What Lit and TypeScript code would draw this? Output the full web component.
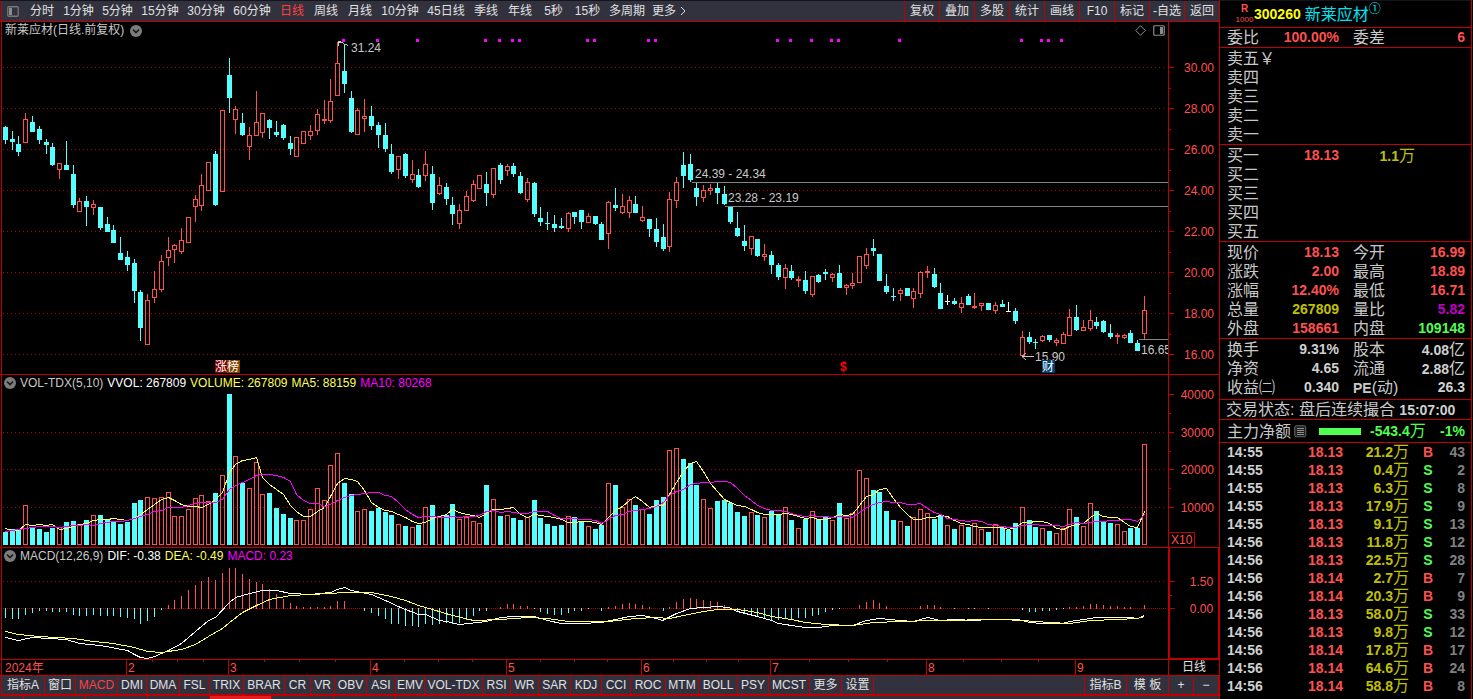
import { LitElement, html, svg, css, nothing } from "lit";
import { customElement, property, state } from "lit/decorators.js";
import { classMap } from "lit/directives/class-map.js";

/* d = falling, u = rising, f/g = unchanged close (volume up / volume down)
   each entry: kind, high, body top, body bottom, low */
const CANDLES = `
d126,127,140,144 d131,139,142,150 d136,144,152,156 u113,119,143,143 d116,122,132,132 d126,129,140,144
d139,142,145,154 d143,147,165,166 u163,163,170,179 d141,165,170,170 d165,174,205,208 u198,201,212,212
d196,201,207,226 u200,204,208,215 d207,207,228,230 d217,224,232,232 d225,230,243,243 d237,253,260,260
d251,257,265,271 d259,263,291,303 d290,292,328,341 u294,300,345,345 u271,289,298,303 u255,261,290,292
u237,250,258,266 u244,245,250,263 u228,240,252,254 u217,217,243,243 u195,199,207,222 u174,185,206,211
u162,162,191,191 d151,154,205,206 u110,110,192,192 d58,75,98,113 u106,109,120,134 d113,123,135,136
u127,135,147,160 u91,122,136,136 u113,113,133,138 d119,120,128,139 d121,132,135,137 d124,125,138,140
d136,143,149,155 u137,137,157,157 u131,131,144,144 u125,131,136,140 u109,114,131,135 u100,119,121,124
u79,101,121,123 u42,63,96,96 d45,71,84,93 d91,98,132,133 u108,110,135,135 u99,116,119,132
d106,116,126,130 d122,125,135,148 d123,135,149,152 d144,154,172,174 u156,156,170,179 d153,154,176,178
u160,174,180,183 d169,175,187,188 u151,164,176,181 d166,174,203,210 u177,185,194,195 d183,187,199,205
d197,205,214,225 u204,210,224,229 u191,196,211,211 u180,184,201,202 u175,175,189,189 d172,184,193,206
u168,168,195,198 d163,165,180,184 u164,166,171,176 d163,166,174,177 d172,176,193,194 u178,182,200,202
d182,183,214,217 d207,218,222,226 d212,223,224,230 d215,224,228,232 d218,226,228,229 u212,213,229,232
d212,212,217,224 d210,210,222,229 u213,216,223,223 d216,216,224,225 d222,224,240,240 u201,202,234,249
d188,205,208,211 u194,206,213,214 u196,200,213,218 d196,204,213,213 u206,217,221,222 d219,219,229,237
d218,229,242,247 d224,237,249,251 u192,199,247,252 u177,182,201,208 d152,165,176,188 d154,164,180,182
d183,188,197,206 u185,190,198,202 u184,188,191,195 d183,188,193,204 d186,194,204,205 d207,207,222,224
d212,228,236,237 d225,241,246,251 u236,236,249,255 d239,239,256,257 u244,254,257,261 d251,255,265,274
d263,265,277,280 u264,268,278,289 d265,271,278,280 u276,279,281,287 d271,280,291,294 u276,276,295,297
d274,275,282,283 d269,272,274,280 u273,274,278,282 d265,273,288,288 u284,285,288,295 u273,283,286,289
u256,256,283,283 u248,254,266,269 d239,248,251,256 d254,254,281,281 d274,286,292,294 d288,296,297,301
u288,290,294,301 d288,288,296,296 u288,291,299,308 u271,272,294,298 u266,271,273,278 d268,274,287,288
d283,293,309,309 f295,301,302,305 d298,301,304,305 u297,303,308,313 d294,296,305,305 u293,306,308,309
u303,303,306,311 d303,303,310,310 u302,305,311,314 d300,304,307,307 g302,311,312,312 d308,311,321,324
u331,337,356,356 d332,337,342,344 d339,342,343,349 u335,336,341,342 d335,335,340,342 u338,340,343,346
u332,334,344,344 u309,317,336,336 d305,317,330,331 u320,327,331,331 u310,320,329,331 d317,322,326,329
d320,321,332,333 d324,333,337,339 u333,335,337,344 u334,335,338,339 d330,333,343,343 d340,343,351,351
u296,310,334,339`
  .trim()
  .split(/\s+/)
  .map((t) => ({ kind: t[0], v: t.slice(1).split(",").map(Number) }));

const VOLUME = [
  532, 529, 530, 505, 527, 529, 532, 528, 527, 522, 521, 524, 520, 515, 515, 519, 521, 524, 522, 503,
  500, 497, 498, 497, 492, 516, 516, 509, 498, 495, 501, 493, 475, 394, 456, 483, 488, 462, 494, 493,
  508, 514, 518, 520, 520, 509, 488, 500, 465, 453, 483, 494, 511, 509, 511, 508, 512, 515, 524, 526,
  527, 525, 507, 505, 516, 515, 504, 519, 517, 521, 523, 485, 499, 516, 515, 518, 520, 517, 500, 518,
  524, 526, 525, 516, 517, 522, 526, 529, 525, 483, 485, 507, 499, 505, 509, 514, 500, 497, 450, 448,
  459, 463, 485, 499, 508, 501, 500, 503, 512, 516, 512, 515, 517, 511, 514, 507, 520, 528, 519, 511,
  519, 517, 520, 503, 518, 513, 470, 478, 490, 492, 511, 520, 521, 526, 517, 509, 513, 519, 515, 525,
  529, 525, 527, 523, 529, 532, 524, 528, 530, 523, 507, 520, 527, 528, 531, 533, 528, 509, 517, 526,
  503, 511, 522, 523, 524, 531, 528, 528, 444,
];

const MACD = [
  -10, -11, -11, -7, -5, -3, -3, -4, -4, -4, -7, -8, -8, -7, -8, -8, -8, -9, -10, -11, -16, -13, -9, -2,
  3, 8, 12, 18, 23, 27, 31, 28, 35, 40, 40, 34, 29, 26, 24, 19, 14, 9, 5, 2, 1, 1, 1, 1, 2, 7, 7, 0, 0,
  -3, -5, -8, -11, -16, -16, -18, -18, -19, -16, -17, -16, -15, -16, -15, -12, -8, -3, -3, 0, 1, 4, 4, 2,
  2, -1, -4, -6, -7, -7, -5, -3, -3, -1, 0, -3, 1, 2, 4, 5, 4, 3, 1, 0, -3, 1, 6, 9, 10, 9, 8, 7, 6, 3,
  0, -4, -6, -8, -9, -10, -12, -12, -11, -11, -10, -10, -8, -7, -4, -2, -1, 0, 0, 3, 6, 8, 5, 2, 0, 0, 0,
  0, 2, 3, 3, 1, 0, -1, 0, -1, -1, 0, -1, 0, 0, 0, 0, -2, -4, -4, -3, -3, -2, -1, 1, 1, 2, 4, 4, 3, 2, 2,
  1, 1, 0, 3,
];

const DIF =
  "5,637 18,640 32,637 66,639 79,643 100,645 127,650 134,654 140,657 147,658 154,656 168,650 181,643 195,631 208,620 215,617 229,602 235,597 249,593 262,590 276,590 290,593 310,594 330,592 337,589 344,587 351,590 371,594 385,600 400,607 418,614 425,614 439,620 446,621 459,624 486,621 500,617 513,616 534,616 547,620 561,623 581,623 601,622 615,619 629,616 642,615 656,618 662,620 676,613 690,608 717,606 728,607 737,611 757,616 771,620 778,623 798,626 805,627 818,627 832,625 852,625 866,620 879,618 900,620 913,621 927,617 940,620 954,619 974,620 988,619 1018,619 1029,622 1042,623 1062,623 1069,621 1083,619 1096,617 1130,617 1137,618 1144,615";
const DEA =
  "5,631 18,634 39,636 73,638 93,641 113,643 134,647 147,651 161,652 181,649 195,644 208,636 222,628 229,622 242,612 256,605 269,599 290,595 330,593 344,592 371,592 391,596 405,600 418,605 432,609 452,615 473,620 500,619 527,617 547,618 568,621 608,621 635,618 656,617 669,618 683,615 703,611 717,609 737,609 757,612 771,616 791,619 805,622 825,624 852,625 873,622 900,621 934,620 1000,619 1022,620 1049,622 1069,623 1090,620 1117,619 1137,618 1144,616";

const SIGNALS = [
  342, 376, 416, 484, 498, 511, 518, 586, 593, 647, 654, 776, 789, 810, 830, 837, 898, 1020, 1040, 1047, 1060,
];

const PLOT_LEFT = 2;
const PLOT_WIDTH = 1166;
const slotX = (i: number) => Math.floor(5.35 + 6.78 * i);
const box = (x: number, y: number, w: number, h: number) => `M${x} ${y}h${w}v${h}h${-w}z`;
const frame = (x: number, top: number, bottom: number) =>
  box(x - 1.5, top + 0.5, 4, Math.max(bottom - top - 1, 0.5));

function average(span: number, head: number[]) {
  return VOLUME.map((_, i) => {
    const y =
      i < span - 1
        ? head[Math.min(i, head.length - 1)]
        : VOLUME.slice(i - span + 1, i + 1).reduce((a, b) => a + b, 0) / span;
    return `${slotX(i) + 0.5},${Math.round(y) + 0.5}`;
  }).join(" ");
}

/* places unscaled content at a horizontal share of the plot */
const pin = (x: number, y: number, content: unknown) => svg`
  <svg x=${((x - PLOT_LEFT) / PLOT_WIDTH) * 100 + "%"} y=${y} overflow="visible">${content}</svg>`;

const gridLine = (y: number, dash = "1 3") => svg`
  <line class="grid" x1="3" x2="1167" y1=${y + 0.5} y2=${y + 0.5} stroke-dasharray=${dash} />`;

const fold = html`<button class="fold" aria-label="展开">
  <svg width="12" height="12" viewBox="0 0 12 12">
    <circle cx="6" cy="6" r="6" fill="#7c7c7c" />
    <path d="M3 4.500l3 3 3-3" fill="none" stroke="#181818" stroke-width="1.600" />
  </svg>
</button>`;

const base = css`
  :host, * { box-sizing: border-box; }
  button {
    margin: 0; padding: 0; border: 0; background: none; color: inherit;
    font: inherit; white-space: nowrap; cursor: pointer;
  }
`;

@customElement("tool-bar")
class ToolBar extends LitElement {
  @state() private active = "日线";

  static styles = [base, css`
    :host {
      display: flex; height: 22px; background: #32323f; color: #e0e0e0;
      border-top: 1px solid #14141c; border-bottom: 1px solid #c00000;
      line-height: 20px;
    }
    .side { width: 22px; margin: 0 2px 0 1px; border-left: 1px solid #c00000; display: grid; place-items: center; }
    .periods { display: flex; flex: 1; }
    .periods button { text-align: center; }
    .periods .on { color: #ff4040; }
    .periods .more { display: flex; align-items: center; gap: 4px; padding-left: 3px; }
    .actions { display: flex; }
    .actions button { width: 35px; border-left: 1px solid #c00000; }
  `];

  private periods: [string, number][] = [
    ["分时", 34], ["1分钟", 39], ["5分钟", 39], ["15分钟", 46], ["30分钟", 46], ["60分钟", 46],
    ["日线", 34], ["周线", 34], ["月线", 34], ["10分钟", 46], ["45日线", 46], ["季线", 34],
    ["年线", 34], ["5秒", 33], ["15秒", 35], ["多周期", 44],
  ];

  render() {
    return html`
      <button class="side" aria-label="侧栏">
        <svg width="12" height="11" viewBox="0 0 12 11">
          <rect x=".75" y=".75" width="10.5" height="9.5" rx="1" fill="none" stroke="#777" stroke-width="1.3" />
          <rect x="2" y="2" width="3" height="7" fill="#8c8c8c" />
        </svg>
      </button>
      <nav class="periods">
        ${this.periods.map(([name, width]) => html`<button
          class=${classMap({ on: this.active === name })}
          style="width:${width}px"
          @click=${() => (this.active = name)}>${name}</button>`)}
        <button class="more">更多
          <svg width="6" height="10" viewBox="0 0 6 10"><path d="M1 1l4 4-4 4" fill="none" stroke="#e0e0e0" /></svg>
        </button>
      </nav>
      <div class="actions">
        ${["复权", "叠加", "多股", "统计", "画线", "F10", "标记", "-自选", "返回"].map(
          (name) => html`<button>${name}</button>`)}
      </div>`;
  }
}

@customElement("axis-scale")
class AxisScale extends LitElement {
  @property({ type: Number }) height = 0;
  @property({ attribute: false }) labels: [number, string][] = [];
  @property({ attribute: false }) minor: number[] = [];

  static styles = css`
    :host { display: block; }
    svg { display: block; }
    path { fill: #c00000; }
    text { fill: #ff5050; text-anchor: end; font-size: 12px; }
  `;

  render() {
    return html`<svg width="100%" height=${this.height}>
      <path d=${this.labels.map(([y]) => box(0, y, 5, 1)).join("") + this.minor.map((y) => box(0, y, 2, 1)).join("")} />
      <svg x="90%" overflow="visible">${this.labels.map(([y, t]) => svg`<text y=${y + 5}>${t}</text>`)}</svg>
    </svg>`;
  }
}

@customElement("stock-charts")
class StockCharts extends LitElement {
  static styles = [base, css`
    :host { display: block; }
    .pane {
      display: grid; grid-template-columns: minmax(0, 1fr) 51px;
      border-bottom: 1px solid #c00000;
    }
    .plot { border-left: 1px solid #c00000; margin-left: 1px; min-width: 0; }
    .axis { border-left: 1px solid #c00000; position: relative; }
    .axis.boxed { border: 2px solid #c00000; border-width: 1px 1px 1px 2px; margin: -1px 0 0; }
    header { display: flex; align-items: center; height: 16px; padding-left: 2px; color: #c8c8c8; gap: 4px; line-height: 16px; white-space: nowrap; }
    header.title { height: 17px; padding: 0 3px 0 3px; gap: 6px; line-height: 17px; }
    .tools { margin-left: auto; display: flex; align-items: center; gap: 7px; }
    .fold, .fold svg { display: block; width: 12px; height: 12px; }
    .white { color: #fff; }
    .yellow { color: #ffff54; }
    .magenta { color: #ff00ff; }
    svg.chart { display: block; width: 100%; }
    .chart text { font-size: 12px; fill: #c8c8c8; }
    .chart .mark { fill: #fff; }
    .chart .cash { fill: #ff0000; font-weight: bold; }
    .crisp { shape-rendering: crispEdges; }
    .grid { stroke: #b00000; }
    .down { fill: #54ffff; }
    .up { fill: none; stroke: #ff5050; }
    .upfill { fill: #ff5050; }
    .flat { fill: #fff; }
    .gap { stroke: #848484; }
    .line { fill: none; }
    .unit {
      position: absolute; left: 0; bottom: 0; width: 26px; height: 15px; padding-left: 2px;
      border: 1px solid #c00000; border-width: 1px 1px 0 0; color: #ff5050; line-height: 14px;
    }
    .dates .plot { height: 15px; }
    .dates text { font-size: 12px; fill: #ff5050; }
    .dates svg { display: block; width: 100%; }
    .dates .axis { text-align: center; line-height: 15px; height: 15px; color: #e0e0e0; }
  `];

  private candles() {
    let down = "", up = "", upfill = "", flat = "";
    CANDLES.forEach(({ kind, v: [hi, top, bottom, lo] }, i) => {
      const x = slotX(i);
      const wicks = (hi < top ? box(x, hi, 1, top - hi) : "") + (lo > bottom ? box(x, bottom, 1, lo - bottom) : "");
      if (kind === "d") down += wicks + box(x - 2, top, 5, bottom - top);
      else if (kind === "u") {
        upfill += wicks;
        if (bottom - top < 3) upfill += box(x - 2, top, 5, 2);
        else up += frame(x, top, bottom);
      } else flat += wicks + box(x - 2, top, 5, 1);
    });
    return svg`<path class="down" d=${down} /><path class="up" d=${up} />
      <path class="upfill" d=${upfill} /><path class="flat" d=${flat} />`;
  }

  private volumes() {
    let down = "", up = "";
    VOLUME.forEach((top, i) => {
      const x = slotX(i);
      if ("dg".includes(CANDLES[i].kind)) down += box(x - 2, top, 5, 545 - top);
      else up += frame(x, top, 545);
    });
    return svg`<path class="down" d=${down} /><path class="up" d=${up} />`;
  }

  private bars() {
    let down = "", up = "";
    MACD.forEach((h, i) => {
      if (h > 0) up += box(slotX(i), 608 - h, 1, h + 1);
      else if (h < 0) down += box(slotX(i), 608, 1, -h);
    });
    return svg`<path class="upfill" d=${up} /><path class="down" d=${down} />`;
  }

  private months: [number, string][] = [
    [126, "2"], [228, "3"], [370, "4"], [506, "5"], [641, "6"], [770, "7"], [926, "8"], [1075, "9"],
  ];
  private weeks = [152, 177, 203, 264, 299, 335, 404, 438, 472, 540, 574, 607, 673, 706, 738, 809, 848, 887, 963, 1001, 1038];

  render() {
    return html`
      <section class="pane">
        <div class="plot">
          <header class="title">
            <span>新莱应材(日线.前复权)</span>${fold}
            <span class="tools">
              <svg width="11" height="11" viewBox="0 0 11 11"><path d="M5.5.7l4.8 4.8-4.8 4.8L.7 5.5z" fill="none" stroke="#8c8c8c" /></svg>
              <svg width="12" height="11" viewBox="0 0 12 11">
                <rect x=".75" y=".75" width="10.5" height="9.5" rx="1" fill="none" stroke="#8c8c8c" stroke-width="1.2" />
                <rect x="7" y="2" width="3" height="7" fill="#8c8c8c" />
              </svg>
            </span>
          </header>
          <svg class="chart" height="335">
            <svg class="crisp" viewBox="2 39 1166 335" width="100%" height="335" preserveAspectRatio="none">
              ${[67, 108, 149, 190, 231, 272, 313, 354].map((y) => gridLine(y))}
              <path fill="#ff00ff" d=${SIGNALS.map((x) => box(x, 39, 3, 3)).join("")} />
              <path class="gap" d="M692 182.5H1168M725 206.5H1168M1139 339.5H1168" />
              ${this.candles()}
            </svg>
            ${pin(337, 2, svg`<path class="crisp" d="M4 .5H1.500V5M1.500 1.500h4l2 2h2l1.500 1" fill="none" stroke="#c8c8c8" />`)}
            ${pin(351, 13, svg`<text>31.24</text>`)}
            ${pin(695, 139, svg`<text>24.39 - 24.34</text>`)}
            ${pin(728, 163, svg`<text>23.28 - 23.19</text>`)}
            ${pin(1141, 315, svg`<text>16.65</text>`)}
            ${pin(1021, 317, svg`<path d="M1 .5H13M5-3L1 .5 5 4" fill="none" stroke="#c8c8c8" />`)}
            ${pin(1035, 322, svg`<text>15.90</text>`)}
            ${pin(215, 321, svg`<rect width="12" height="13" fill="#800000" /><rect x="12" width="13" height="13" fill="#804000" />
              <text class="mark" y="11">涨榜</text>`)}
            ${pin(1042, 321, svg`<rect width="13" height="13" fill="#003c70" /><text class="mark" y="11">财</text>`)}
            ${pin(840, 322, svg`<path d="M1 2.500L4 0l3 2.500z" fill="#f00" /><text class="cash" y="10">$</text>`)}
          </svg>
        </div>
        <div class="axis">
          <axis-scale .height=${352}
            .labels=${[30, 28, 26, 24, 22, 20, 18, 16].map((n, i) => [45 + i * 41, n + ".00"])}
            .minor=${[0, 1, 2, 3, 4, 5, 6].map((i) => 66 + i * 41)}></axis-scale>
        </div>
      </section>

      <section class="pane">
        <div class="plot">
          <header>${fold}<span>VOL-TDX(5,10)</span><span class="white">VVOL: 267809</span>
            <span class="yellow">VOLUME: 267809</span><span class="yellow">MA5: 88159</span><span class="magenta">MA10: 80268</span></header>
          <svg class="chart crisp" viewBox="2 391 1166 156" height="156" preserveAspectRatio="none">
            ${[432, 469, 507].map((y) => gridLine(y))}
            ${this.volumes()}
            <polyline class="line" stroke="#ffff54" points=${average(5, [528, 530, 530, 524])} />
            <polyline class="line" stroke="#ff00ff" points=${average(10, [531, 530, 529, 528, 527, 526, 526, 526, 527])} />
          </svg>
        </div>
        <div class="axis">
          <axis-scale .height=${172}
            .labels=${[[19, "40000"], [57, "30000"], [94, "20000"], [132, "10000"]]}
            .minor=${[38, 76, 113]}></axis-scale>
          <span class="unit">X10</span>
        </div>
      </section>

      <section class="pane">
        <div class="plot">
          <header>${fold}<span>MACD(12,26,9)</span><span class="white">DIF: -0.38</span>
            <span class="yellow">DEA: -0.49</span><span class="magenta">MACD: 0.23</span></header>
          <svg class="chart crisp" viewBox="2 564 1166 95" height="95" preserveAspectRatio="none">
            ${gridLine(581)}${gridLine(608, "1 1")}
            ${this.bars()}
            <polyline class="line" stroke="#fff" transform="translate(.5 .5)" points=${DIF} />
            <polyline class="line" stroke="#ffff54" transform="translate(.5 .5)" points=${DEA} />
          </svg>
        </div>
        <div class="axis boxed">
          <axis-scale .height=${110} .labels=${[[33, "1.50"], [60, "0.00"]]} .minor=${[47]}></axis-scale>
        </div>
      </section>

      <section class="pane dates">
        <div class="plot">
          <svg height="15">
            <svg class="crisp" viewBox="2 0 1166 15" width="100%" height="15" preserveAspectRatio="none">
              <path fill="#c00000" d=${this.months.map(([x]) => box(x, 0, 1, 15)).join("") + this.weeks.map((x) => box(x, 0, 1, 2)).join("")} />
            </svg>
            ${pin(5, 12, svg`<text>2024年</text>`)}
            ${this.months.map(([x, m]) => pin(x + 2, 12, svg`<text>${m}</text>`))}
          </svg>
        </div>
        <div class="axis">日线</div>
      </section>`;
  }
}

@customElement("indicator-bar")
class IndicatorBar extends LitElement {
  @state() private active = "MACD";

  static styles = [base, css`
    :host { display: block; background: #32323f; color: #e0e0e0; }
    .tabs { display: flex; height: 20px; margin-left: 1px; border-bottom: 2px solid #c00000; border-left: 1px solid #c00000; line-height: 18px; }
    .tabs button { border-right: 1px solid #c00000; }
    .tabs .on { color: #ff4040; }
    .space { flex: 1; border-right: 1px solid #c00000; }
    .tail { display: flex; height: 3px; padding-left: 23px; }
    .tail i { width: 62px; border-left: 1px solid #c00000; }
    .tail .on { background: #e02020; }
  `];

  private tabs: [string, number][] = [
    ["指标A", 43], ["窗口", 31], ["MACD", 42], ["DMI", 29], ["DMA", 33], ["FSL", 30], ["TRIX", 34],
    ["BRAR", 41], ["CR", 26], ["VR", 24], ["OBV", 32], ["ASI", 29], ["EMV", 29], ["VOL-TDX", 58],
    ["RSI", 28], ["WR", 28], ["SAR", 32], ["KDJ", 31], ["CCI", 29], ["ROC", 35], ["MTM", 33],
    ["BOLL", 39], ["PSY", 31], ["MCST", 41], ["更多", 32], ["设置", 32],
  ];
  private tools: [string, number][] = [["指标B", 42], ["模 板", 42], ["+", 25], ["−", 25]];

  private tab = ([name, width]: [string, number]) => html`<button
    class=${classMap({ on: this.active === name })}
    style="width:${width}px"
    @click=${() => (this.active = name)}>${name}</button>`;

  render() {
    return html`
      <div class="tabs">${this.tabs.map(this.tab)}<span class="space"></span>${this.tools.map(this.tab)}</div>
      <div class="tail"><i></i><i></i><i></i><i class="on"></i><i></i><i></i><i></i></div>`;
  }
}

const figure = (text: string) =>
  text.split(/([万亿])/).filter(Boolean).map((part) => (/[万亿]/.test(part) ? html`<span class="han">${part}</span>` : part));

@customElement("quote-panel")
class QuotePanel extends LitElement {
  static styles = [base, css`
    :host {
      display: block; margin-right: 1px; border: 1px solid #c00000; border-width: 0 1px;
      color: #c8c8c8; font-size: 16px; line-height: 19px; overflow: hidden; white-space: nowrap;
    }
    .top { border-top: 1px solid #14141c; height: 28px; }
    .top, .block { border-bottom: 1px solid #c00000; }
    .name { display: flex; align-items: center; height: 26px; padding-left: 15px; margin: 0; font-weight: normal; font-size: 16px; color: #00e4f4; }
    .tag { display: grid; grid-template-rows: 11px 10px; width: 19px; text-align: center; color: #ff5050; font-size: 8px; line-height: 10px; }
    .tag b { font-size: 10px; }
    .code { color: #ffff00; font-weight: bold; font-size: 14px; margin-right: 4px; }
    .sup { font-size: 12px; line-height: 12px; align-self: flex-start; padding-top: 2px; }
    dl, table { margin: 0; }
    .pairs { display: grid; grid-template-columns: 1fr 1fr; column-gap: 14px; padding: 0 6px 0 7px; }
    .pairs.tall { padding-top: 1px; }
    .pairs.low { padding-bottom: 2px; padding-top: 1px; }
    .pair { display: flex; justify-content: space-between; height: 19px; }
    dt, dd, th, td { margin: 0; padding: 0; font-weight: normal; text-align: left; }
    .num, .trades td { font-weight: bold; font-size: 14px; }
    .han { font-weight: normal; font-size: 16px; }
    .book, .book tbody, .trades, .trades tbody { display: block; }
    .book { padding: 1px 6px 0 7px; }
    .book tr { display: grid; grid-template-columns: 48fr 64fr 76fr 50fr; height: 19px; }
    .book td { text-align: right; }
    .red { color: #ff5050; }
    .green { color: #50ff50; }
    .gold { color: #c0c000; }
    .purple { color: #c000c0; }
    .gray { color: #808080; }
    .white { color: #d0d0d0; }
    .state { padding-left: 6px; height: 20px; }
    .flow { display: flex; align-items: center; height: 23px; padding: 0 6px 0 7px; }
    .flow svg { margin-left: 3px; }
    .bar { width: 42px; height: 7px; margin: 0 9px 0 12px; background: #50ff50; }
    .flow .last { margin-left: auto; }
    .trades { padding: 0 6px 0 7px; }
    .trades tr { display: grid; grid-template-columns: 70fr 46fr 66fr 38fr 18fr; height: 18px; line-height: 18px; }
    .trades td { text-align: right; }
    .trades td:first-child { text-align: left; }
    .trades td:nth-child(4) { text-align: center; }
  `];

  private pairs(rows: [string, string, string][], variant = "") {
    return html`<dl class="block pairs ${variant}">
      ${rows.map(([label, value, tone]) => html`<div class="pair">
        <dt>${label.startsWith("PE") ? html`<span class="num">PE</span>(动)` : label}</dt>
        <dd class="num ${tone}">${figure(value)}</dd></div>`)}
    </dl>`;
  }

  private book(rows: [string, string?, string?][]) {
    return html`<table class="block book"><tbody>
      ${rows.map(([side, price, size]) => html`<tr><th scope="row">${side}</th>
        ${price ? html`<td class="num red">${price}</td><td class="num gold">${figure(size!)}</td>` : nothing}</tr>`)}
    </tbody></table>`;
  }

  private trades: [string, string, string, string, number][] = [
    ["14:55", "18.13", "21.2万", "B", 43], ["14:55", "18.13", "0.4万", "S", 2],
    ["14:55", "18.13", "6.3万", "S", 8], ["14:55", "18.13", "17.9万", "S", 9],
    ["14:55", "18.13", "9.1万", "S", 13], ["14:56", "18.13", "11.8万", "S", 12],
    ["14:56", "18.13", "22.5万", "S", 28], ["14:56", "18.14", "2.7万", "B", 7],
    ["14:56", "18.14", "20.3万", "B", 9], ["14:56", "18.13", "58.0万", "S", 33],
    ["14:56", "18.13", "9.8万", "S", 12], ["14:56", "18.14", "17.8万", "B", 17],
    ["14:56", "18.14", "64.6万", "B", 24], ["14:56", "18.14", "58.8万", "B", 8],
  ];

  render() {
    return html`
      <div class="top"><h1 class="name">
        <span class="tag"><b>R</b><span>1000</span></span><span class="code">300260</span>新莱应材<span class="sup">①</span>
      </h1></div>
      ${this.pairs([["委比", "100.00%", "red"], ["委差", "6", "red"]])}
      ${this.book([["卖五￥"], ["卖四"], ["卖三"], ["卖二"], ["卖一"]])}
      ${this.book([["买一", "18.13", "1.1万"], ["买二"], ["买三"], ["买四"], ["买五"]])}
      ${this.pairs([
        ["现价", "18.13", "red"], ["今开", "16.99", "red"],
        ["涨跌", "2.00", "red"], ["最高", "18.89", "red"],
        ["涨幅", "12.40%", "red"], ["最低", "16.71", "red"],
        ["总量", "267809", "gold"], ["量比", "5.82", "purple"],
        ["外盘", "158661", "red"], ["内盘", "109148", "green"],
      ], "tall")}
      ${this.pairs([
        ["换手", "9.31%", "white"], ["股本", "4.08亿", "white"],
        ["净资", "4.65", "white"], ["流通", "2.88亿", "white"],
        ["收益㈡", "0.340", "white"], ["PE(动)", "26.3", "white"],
      ], "low")}
      <div class="block state">交易状态: 盘后连续撮合 <span class="num white">15:07:00</span></div>
      <div class="block flow">主力净额
        <svg width="13" height="13" viewBox="0 0 13 13">
          <rect x=".75" y=".75" width="11" height="11" rx="1.500" fill="#202020" stroke="#686868" />
          <path d="M3 3.500h7M3 5.500h7M3 7.500h7M3 9.500h7" stroke="#909090" />
        </svg>
        <span class="bar"></span><span class="num green">${figure("-543.4万")}</span>
        <span class="num green last">-1%</span></div>
      <table class="trades"><tbody>
        ${this.trades.map(([time, price, size, side, count]) => html`<tr>
          <td class="white">${time}</td><td class="red">${price}</td><td class="gold">${figure(size)}</td>
          <td class=${side === "B" ? "red" : "green"}>${side}</td><td class="gray">${count}</td></tr>`)}
      </tbody></table>`;
  }
}

@customElement("app-root")
class AppRoot extends LitElement {
  static styles = css`
    :host {
      display: grid; grid-template-columns: minmax(0, 1fr) 254px;
      height: 100vh; overflow: hidden; background: #000; color: #e0e0e0;
      font: 12px/16px "Liberation Sans", "Noto Sans CJK SC", sans-serif;
    }
    main { min-width: 0; }
  `;

  render() {
    return html`
      <main><tool-bar></tool-bar><stock-charts></stock-charts><indicator-bar></indicator-bar></main>
      <quote-panel></quote-panel>`;
  }
}
